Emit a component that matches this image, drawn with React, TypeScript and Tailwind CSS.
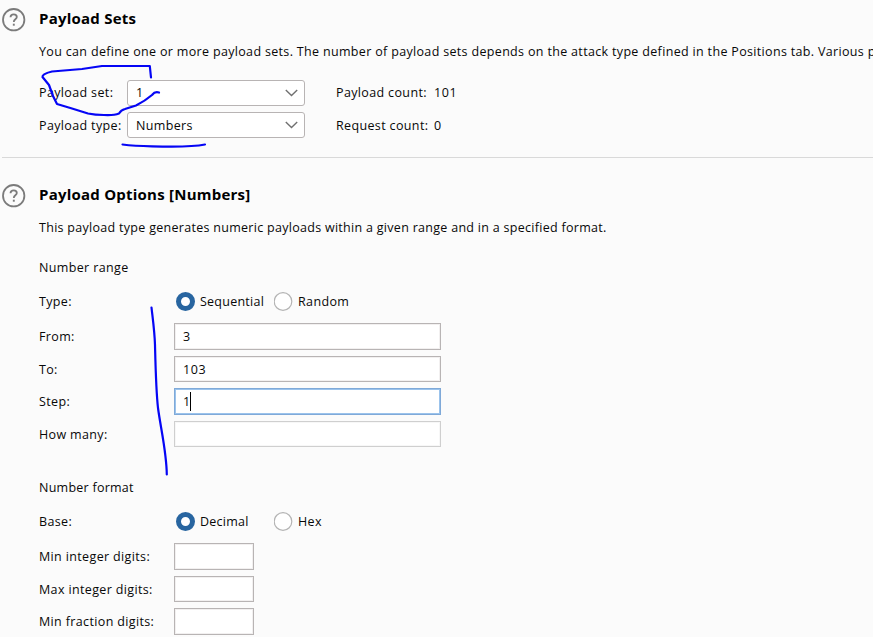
import React from "react";

function HelpIcon() {
  return (
    <svg width="24" height="24" viewBox="0 0 24 24" fill="none" stroke="#7b7b7b" className="shrink-0">
      <circle cx="11.7" cy="11.7" r="10.7" strokeWidth="1.8" />
      <path d="M8.5 9.3C8.6 7.4 9.9 6.4 11.7 6.4c1.9 0 3.1 1 3.1 2.6 0 2.3-3 2.3-3 4.9" strokeWidth="1.8" />
      <path d="M11.8 15.7v2" strokeWidth="1.9" />
    </svg>
  );
}

function Heading({ children }: { children: string }) {
  return (
    <div className="flex h-6 items-center pl-[2px]">
      <HelpIcon />
      <h2 className="ml-[13px] -mt-[4px] text-[15px] leading-6 font-bold tracking-[0.23px] text-black">{children}</h2>
    </div>
  );
}

function Select({ value, low }: { value: string; low?: boolean }) {
  return (
    <div className="flex h-[26px] w-[178px] items-center justify-between rounded-[3px] border border-[#b8b4b4] bg-white pr-[6px] pl-[8px]">
      <span className={low ? "pt-[2px]" : ""}>{value}</span>
      <svg width="13" height="8" viewBox="0 0 13 8" fill="none" stroke="#707070" strokeWidth="1.4">
        <path d="M0.8 1L6.5 6.6L12.2 1" />
      </svg>
    </div>
  );
}

function Radio({ label, checked, className }: { label: string; checked?: boolean; className?: string }) {
  return (
    <div className={`flex items-center ${className ?? ""}`}>
      <svg width="20" height="20" viewBox="0 0 20 20" className="shrink-0">
        {checked ? (
          <circle cx="9.5" cy="9.5" r="7" fill="#fff" stroke="#2865a0" strokeWidth="5" />
        ) : (
          <circle cx="9" cy="9.5" r="8.8" fill="#fff" stroke="#b4b4b4" strokeWidth="1.2" />
        )}
      </svg>
      <span className="ml-[4px]">{label}</span>
    </div>
  );
}

type FieldProps = { label: string; box: string; value?: string; focused?: boolean; low?: boolean };

function Field({ label, box, value, focused, low }: FieldProps) {
  const shift = low ? "pt-[2px]" : "";
  return (
    <div className="flex items-center">
      <span className={`w-[135px] shrink-0 ${shift}`}>{label}</span>
      <div className={`flex items-center border bg-white pl-[8px] ${box}`}>
        <span className={shift}>{value}</span>
        {focused && <span className="-ml-px h-[19px] w-px bg-black" />}
      </div>
    </div>
  );
}

const grey = "border-[#b8b4b4] shadow-[inset_0_0_0_1px_#f2f0f0]";

export default function App() {
  return (
    <div className="relative h-[637px] w-[873px] overflow-hidden bg-[#fbfbfb] font-['Open_Sans','Noto_Sans',sans-serif] text-[12.5px] leading-[20px] tracking-[0.36px] whitespace-nowrap text-[#080808]">
      <section className="h-[157px] pt-[8px]">
        <Heading>Payload Sets</Heading>
        <p className="mt-[10px] pl-[39px] tracking-[0.33px]">
          You can define one or more payload sets. The number of payload sets depends on the attack type defined in the Positions tab. Various p
        </p>
        <div className="mt-[18px] flex flex-col gap-[6px] pl-[39px]">
          <div className="flex items-center">
            <span className="w-[88px]">Payload set:</span>
            <Select value="1" />
            <span className="ml-[31px] w-[98px]">Payload count:</span>
            <span className="tracking-[0.6px]">101</span>
          </div>
          <div className="flex items-center">
            <span className="w-[88px] pt-[2px]">Payload type:</span>
            <Select value="Numbers" low />
            <span className="ml-[31px] w-[98px] pt-[2px]">Request count:</span>
            <span className="pt-[2px]">0</span>
          </div>
        </div>
      </section>
      <div className="ml-[2px] h-px bg-[#d9d9d9]" />
      <section className="pt-[26px]">
        <Heading>Payload Options [Numbers]</Heading>
        <div className="pl-[39px]">
          <p className="mt-[10px] tracking-[0.29px]">
            This payload type generates numeric payloads within a given range and in a specified format.
          </p>
          <h3 className="mt-[20px]">Number range</h3>
          <div className="mt-[14px] flex items-center">
            <span className="w-[137px]">Type:</span>
            <Radio label="Sequential" checked className="w-[98px] tracking-[0.25px]" />
            <Radio label="Random" />
          </div>
          <div className="mt-[11px] flex flex-col">
            <Field label="From:" value="3" box={`h-[27px] w-[267px] ${grey}`} />
            <div className="h-[6px]" />
            <Field label="To:" value="103" low box={`h-[26px] w-[267px] tracking-[0.6px] ${grey}`} />
            <div className="h-[6px]" />
            <Field label="Step:" value="1" focused box="h-[27px] w-[267px] border-[#7fa9d8] shadow-[inset_0_0_0_1px_#9bc3ec]" />
            <div className="h-[6px]" />
            <Field label="How many:" low box="h-[26px] w-[267px] border-[#cfcfcf] shadow-[inset_0_0_0_1px_#f7f7f7]" />
          </div>
          <h3 className="mt-[31px] tracking-[0.25px]">Number format</h3>
          <div className="mt-[14px] flex items-center">
            <span className="w-[137px]">Base:</span>
            <Radio label="Decimal" checked className="w-[98px] tracking-[0.25px]" />
            <Radio label="Hex" />
          </div>
          <div className="mt-[11px] flex flex-col">
            <Field label="Min integer digits:" box={`h-[27px] w-[80px] ${grey}`} />
            <div className="h-[6px]" />
            <Field label="Max integer digits:" low box={`h-[26px] w-[80px] ${grey}`} />
            <div className="h-[6px]" />
            <Field label="Min fraction digits:" box={`h-[27px] w-[80px] ${grey}`} />
          </div>
        </div>
      </section>
      <svg
        className="pointer-events-none absolute inset-0"
        width="873"
        height="637"
        viewBox="0 0 873 637"
        fill="none"
        stroke="#0505f5"
        strokeWidth="2.2"
        strokeLinecap="round"
        strokeLinejoin="round"
      >
        <path d="M151 77.5L149.8 66H102L82 69L52 71.5Q42 74 42.5 77L49 85L53 96L57 104L72 108.5L88 113.5Q95 115 104 115Q114 115.5 119 113.5Q121 110 125 109L136 105.5Q145 101 152 95Q155 91 159 92.5" />
        <path d="M122.5 144.5Q134 146 152 146.3Q190 147.5 205 144.5" />
        <path d="M151.5 307.5C152.5 317 154.5 330 155 345C155.5 365 156 390 158 408C161 430 166.5 452 166.8 474.5" />
      </svg>
    </div>
  );
}
